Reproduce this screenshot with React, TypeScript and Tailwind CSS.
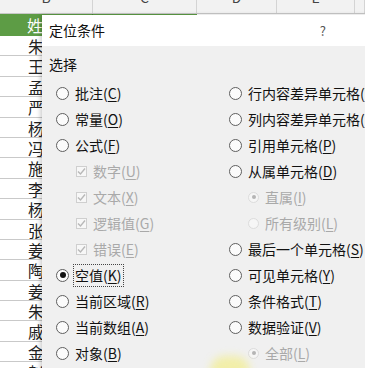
import React from "react";

const names = [
  "朱军", "王平", "孟雪", "严冰", "杨柳", "冯丽", "施玉", "李勇", "杨伟",
  "张帆", "姜杉", "陶钢", "姜瑞", "朱舜", "戚光", "金鑫", "赵刚",
];

type Opt = {
  label: string;
  key: string;
  kind: "radio" | "check" | "sub";
  disabled?: boolean;
  checked?: boolean;
  focus?: boolean;
};

const left: Opt[] = [
  { label: "批注", key: "C", kind: "radio" },
  { label: "常量", key: "O", kind: "radio" },
  { label: "公式", key: "F", kind: "radio" },
  { label: "数字", key: "U", kind: "check", disabled: true },
  { label: "文本", key: "X", kind: "check", disabled: true },
  { label: "逻辑值", key: "G", kind: "check", disabled: true },
  { label: "错误", key: "E", kind: "check", disabled: true },
  { label: "空值", key: "K", kind: "radio", checked: true, focus: true },
  { label: "当前区域", key: "R", kind: "radio" },
  { label: "当前数组", key: "A", kind: "radio" },
  { label: "对象", key: "B", kind: "radio" },
];

const right: Opt[] = [
  { label: "行内容差异单元格", key: "W", kind: "radio" },
  { label: "列内容差异单元格", key: "M", kind: "radio" },
  { label: "引用单元格", key: "P", kind: "radio" },
  { label: "从属单元格", key: "D", kind: "radio" },
  { label: "直属", key: "I", kind: "sub", disabled: true, checked: true },
  { label: "所有级别", key: "L", kind: "sub", disabled: true },
  { label: "最后一个单元格", key: "S", kind: "radio" },
  { label: "可见单元格", key: "Y", kind: "radio" },
  { label: "条件格式", key: "T", kind: "radio" },
  { label: "数据验证", key: "V", kind: "radio" },
  { label: "全部", key: "L", kind: "sub", disabled: true, checked: true },
];

const Option = ({ o }: { o: Opt }) => {
  const text = o.disabled ? "text-[#a9a9a9]" : "text-[#111]";
  return (
    <div className="h-[26px] flex items-center">
      {o.kind === "radio" && (
        <span className="w-[13px] h-[13px] rounded-full border border-[#5f5f5f] bg-[#fbfbfb] flex items-center justify-center shrink-0">
          {o.checked && <span className="w-[6px] h-[6px] rounded-full bg-[#111]" />}
        </span>
      )}
      {o.kind === "check" && (
        <span className="ml-[20px] w-[11px] h-[11px] border border-[#cfcfcf] bg-[#f7f7f7] flex items-center justify-center shrink-0">
          <svg width="9" height="9" viewBox="0 0 9 9">
            <path d="M1 4.5 L3.5 7 L8 1.5" fill="none" stroke="#b8b8b8" strokeWidth="1.4" />
          </svg>
        </span>
      )}
      {o.kind === "sub" && (
        <span className="ml-[19px] w-[11px] h-[11px] rounded-full border border-[#dcdcdc] bg-[#f6f6f6] flex items-center justify-center shrink-0">
          {o.checked && <span className="w-[4px] h-[4px] rounded-full bg-[#b5b5b5]" />}
        </span>
      )}
      <span
        className={`ml-[5px] ${text} whitespace-nowrap px-[1px] ${
          o.focus ? "outline outline-1 outline-dotted outline-[#444]" : ""
        }`}
      >
        {o.label}(<span className="underline underline-offset-2">{o.key}</span>)
      </span>
    </div>
  );
};

export default function App() {
  return (
    <div
      className="relative w-[365px] h-[368px] overflow-hidden bg-white"
      style={{ fontFamily: '"Noto Sans CJK SC", "Noto Sans", sans-serif' }}
    >
      {/* sheet */}
      <div className="flex flex-col">
        <div className="flex h-[14px] bg-[#f2f2f2] border-b border-[#c8c8c8] text-[14px] text-[#444] overflow-hidden">
          {[
            ["B", "w-[93px]"],
            ["C", "w-[104px]"],
            ["D", "w-[80px]"],
            ["E", "w-[78px]"],
            ["", "flex-1"],
          ].map(([l, w], i) => (
            <div key={i} className={`${w} border-r border-[#d4d4d4] flex justify-center items-start`}>
              <span className="leading-[14px] -mt-[10px]">{l}</span>
            </div>
          ))}
        </div>
        <div className="flex h-[22px]">
          <div className="w-[93px] bg-[#5d9c45] border-r border-[#4a7f37] text-white text-[16px] leading-[22px] pl-[27px]">
            姓名
          </div>
          <div className="w-[104px] bg-[#5d9c45]" />
          <div className="flex-1 border-b border-[#d4d4d4]" />
        </div>
        {names.map((n, i) => (
          <div
            key={i}
            className="h-[20.4px] shrink-0 border-b border-[#c9c9c9] text-[16px] leading-[20px] text-[#222] pl-[28px] whitespace-nowrap"
          >
            {n}
          </div>
        ))}
      </div>

      {/* yellow pointer highlight */}
      <div className="absolute left-[210px] top-[356px] w-[40px] h-[30px] rounded-full bg-[#f3ee8c] blur-[4px] z-20 opacity-70" />

      {/* dialog */}
      <div className="absolute left-[42px] top-[15px] w-[380px] h-[370px] bg-[#f0f0f0] shadow-[-2px_0_4px_rgba(0,0,0,0.18)] flex flex-col z-10 text-[14px]">
        <div className="h-[31px] bg-white flex items-center pl-[7px] text-[#111] shrink-0">
          <span>定位条件</span>
          <span className="ml-auto text-[#555] text-[13px]">?</span>
          <span className="w-[96px] text-center text-[#555]">×</span>
        </div>
        <div className="pl-[7px] pt-[8px] text-[#111] leading-[20px]">选择</div>
        <div className="grid grid-cols-[173px_1fr] pl-[14px] mt-[6px]">
          <div className="flex flex-col">
            {left.map((o, i) => (
              <Option key={i} o={o} />
            ))}
          </div>
          <div className="flex flex-col">
            {right.map((o, i) => (
              <Option key={i} o={o} />
            ))}
          </div>
        </div>
      </div>
    </div>
  );
}
